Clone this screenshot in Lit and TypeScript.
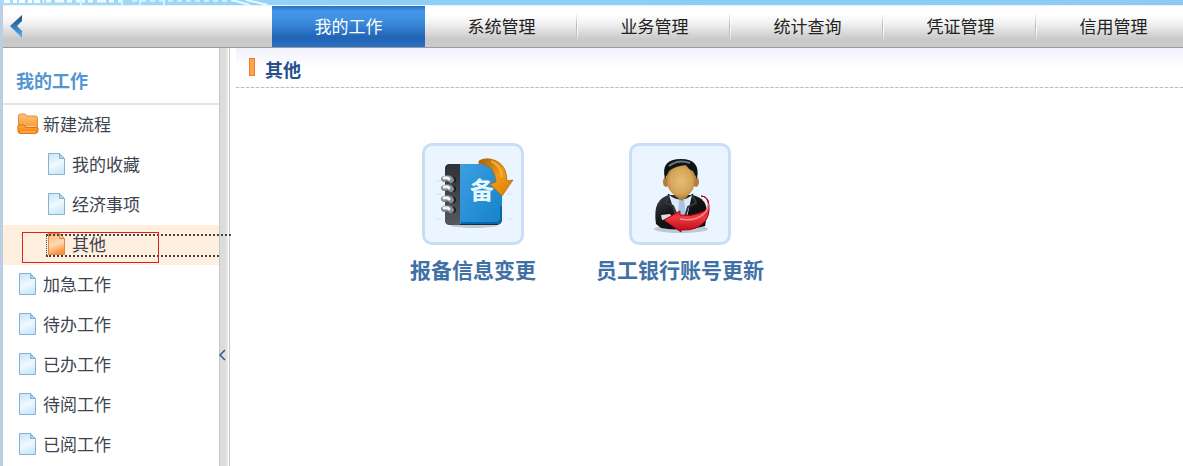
import { LitElement, html, css, svg } from "lit";
import { customElement, property } from "lit/decorators.js";

const tabs = ["我的工作", "系统管理", "业务管理", "统计查询", "凭证管理", "信用管理"];

type Item = { label: string; kind: "folder" | "file"; child?: boolean; current?: boolean };
const items: Item[] = [
  { label: "新建流程", kind: "folder" },
  { label: "我的收藏", kind: "file", child: true },
  { label: "经济事项", kind: "file", child: true },
  { label: "其他", kind: "file", child: true, current: true },
  { label: "加急工作", kind: "file" },
  { label: "待办工作", kind: "file" },
  { label: "已办工作", kind: "file" },
  { label: "待阅工作", kind: "file" },
  { label: "已阅工作", kind: "file" },
];

@customElement("tree-icon")
export class TreeIcon extends LitElement {
  @property() kind = "file";
  @property({ type: Boolean }) active = false;
  static styles = css`
    :host { display: block; flex: none; }
    svg { display: block; }
  `;
  render() {
    if (this.kind === "folder") {
      return html`<svg width="22" height="22" viewBox="0 0 22 22">
        <defs>
          <linearGradient id="b" x2="0" y2="1"><stop offset="0" stop-color="#ffc27a"/><stop offset="1" stop-color="#f28a1c"/></linearGradient>
          <linearGradient id="f" x2="0" y2="1"><stop offset="0" stop-color="#ffa948"/><stop offset="1" stop-color="#f57c00"/></linearGradient>
        </defs>
        <path d="M1.500 13V3q0-2 2-2h4q1.500 0 2 2h8.500q2.500 0 2.500 2V15q0 3-2 5H3z" fill="url(#b)" stroke="#e88a35"/>
        <path d="M.7 14q0-2 2-2h3.800q1.500 0 2 2.500h11q2 0 1.800 2l-.5 2q-.4 2-2.500 2H3.500q-2.200 0-2.500-2z" fill="url(#f)" stroke="#d96a06" stroke-width=".8"/>
        <path d="M9 13.500h10M3.500 19h15" stroke="#ffd5a4" stroke-width=".8"/>
      </svg>`;
    }
    const [edge, top, bottom, fold] = this.active
      ? ["#dd8a45", "#ffd9b0", "#ff9440", "#ffc18c"]
      : ["#86b2d2", "#f0f9ff", "#cfe9fb", "#a9d0ec"];
    return html`<svg width="18" height="22" viewBox="0 0 18 22">
      <defs><linearGradient id="p" x2=".3" y2="1"><stop offset="0" stop-color=${this.active ? "#ffb878" : "#c8e4f7"}/><stop offset=".6" stop-color=${top}/><stop offset="1" stop-color=${bottom}/></linearGradient></defs>
      <path d="M.5.500H11.500L16.500 5.500V21.500H.5z" fill="url(#p)" stroke=${edge}/>
      <path d="M11.500.500V5.500H16.500z" fill=${fold} stroke=${edge}/>
    </svg>`;
  }
}

const notebook = html`<svg class="art" viewBox="0 0 96 96" aria-hidden="true">
  <defs>
    <linearGradient id="cover" x2="1" y2="1"><stop offset="0" stop-color="#3d9fe0"/><stop offset="1" stop-color="#1582cb"/></linearGradient>
    <linearGradient id="spine" x2="0" y2="1"><stop offset="0" stop-color="#2e3236"/><stop offset="1" stop-color="#55595d"/></linearGradient>
    <linearGradient id="turn" x2="1" y2="1"><stop offset="0" stop-color="#a86204"/><stop offset=".5" stop-color="#f09a18"/><stop offset="1" stop-color="#d87d05"/></linearGradient>
  </defs>
  <path d="M11 35H88M11 48H88M11 73H88" stroke="#d2dbe3" stroke-dasharray="5 3 9 4" opacity=".7"/>
  <ellipse cx="49" cy="79" rx="24" ry="3" fill="#9eafbd" opacity=".6"/>
  <rect x="20" y="18" width="57" height="61" rx="5" fill="#242a2f"/>
  <path d="M35 18H72q5 0 5 5V73q0 5-5 5H35z" fill="url(#cover)"/>
  <path d="M25 18H35V79H25q-5 0-5-5V23q0-5 5-5z" fill="url(#spine)"/>
  <path d="M76 60V72q0 5-6 5H36" fill="none" stroke="#0867a6" stroke-width="2"/>
  ${[34, 43, 54, 64].map((y) => svg`<g>
    <circle cx="28" cy=${y} r="3" fill="#1a1c1e"/>
    <path d="M19 ${y - 1}q5-2 7 1" fill="none" stroke="#848c93" stroke-width="6" stroke-linecap="round"/>
    <path d="M19 ${y - 2}q4-1 5 1" fill="none" stroke="#f4f5f6" stroke-width="3" stroke-linecap="round"/></g>`)}
  <text x="57" y="53" text-anchor="middle" class="glyph">备</text>
  <path d="M54 15C62 10 76 14 80 24Q82 29 82 35L88 34 77 50 65 38 71 36Q70 24 63 20 58 17 54 18z" fill="url(#turn)" stroke="#a96406" stroke-width=".7"/>
  <path d="M66 15q10 4 11 16" fill="none" stroke="#ffbf4d" stroke-width="2" opacity=".7"/>
</svg>`;

const person = html`<svg class="art" viewBox="0 0 96 96" aria-hidden="true">
  <defs>
    <radialGradient id="face" cx=".48" cy=".5" r=".6"><stop offset="0" stop-color="#e6bd79"/><stop offset=".65" stop-color="#d5a458"/><stop offset="1" stop-color="#986426"/></radialGradient>
    <linearGradient id="suit" x2="1" y2="1"><stop offset="0" stop-color="#3c4247"/><stop offset=".4" stop-color="#151719"/><stop offset="1" stop-color="#050506"/></linearGradient>
    <linearGradient id="red" x2="0" y2="1"><stop offset="0" stop-color="#bd0c18"/><stop offset=".6" stop-color="#ee3a43"/><stop offset="1" stop-color="#b80715"/></linearGradient>
  </defs>
  <ellipse cx="49" cy="83" rx="27" ry="4" fill="#8d9ba6" opacity=".5"/>
  <path d="M24 78Q20 52 38 49L60 49Q76 52 75 69L73 80Q52 86 29 82z" fill="url(#suit)"/>
  <path d="M37 49Q49 58 60 49L55 71H44z" fill="#dceafa"/>
  <path d="M47 54h5l2 15-4 3-4-3z" fill="#a8c4e2"/>
  <path d="M37 48L34 57 41 60 46 72M60 48L64 57 56 61 53 71" fill="none" stroke="#32383e" stroke-width="2"/>
  <path d="M43 43h13v7l-6 5-7-5z" fill="#b37b36"/>
  <ellipse cx="34" cy="36" rx="3" ry="5" fill="#b17d3b"/><ellipse cx="64" cy="36" rx="3" ry="5" fill="#b17d3b"/>
  <path d="M35 25Q35 18 49 18T64 26L63 38Q59 51 49 52 38 49 35 38z" fill="url(#face)"/>
  <path d="M33 33Q28 13 49 13 69 13 65 33L61 25Q57 24 54 19 43 20 37 25z" fill="#101417"/>
  <path d="M37 20Q46 13 58 17" fill="none" stroke="#6c7880" stroke-width="2"/>
  <path d="M29 69l9-1 3 4-11 2z" fill="#d7dde1"/>
  <path d="M69 50Q74 50 76 56 79 63 68 67 58 71 48 69V65L32 74 49 86V84Q66 85 74 74 79 66 76 54 74 50 69 50z" fill="url(#red)" stroke="#a90413"/>
  <path d="M76 58q1 9-11 14-7 3-17 1" fill="none" stroke="#ff898b" stroke-width="1.500"/>
</svg>`;

@customElement("app-root")
export class AppRoot extends LitElement {
  static styles = css`
    :host { display: block; font: 17px/24px "Noto Sans CJK SC", sans-serif; color: #3c4450; background: #fff; }
    *, *::before, *::after { box-sizing: border-box; }
    a { color: inherit; text-decoration: none; }
    ul { list-style: none; margin: 0; padding: 0; }
    .page { min-height: 100vh; display: flex; flex-direction: column; overflow: hidden; }
    .banner { height: 5px; background: linear-gradient(90deg, #a6dcf8, #8fd0f6 30%, #8ccaf4); }
    .banner svg { display: block; }
    .frame { flex: 1; display: flex; flex-direction: column; border-left: 3px solid #bccfe2; }
    .nav { display: flex; height: 43px; overflow: hidden; border-bottom: 1px solid #999b9e; border-top: 1px solid #e9f5fc; background: linear-gradient(#fff 20%, #f2f2f2 42%, #c8c8c8 82%, #cbcbcb); }
    .back { flex: none; width: 269px; margin: 0; padding: 7px 6px; border: 0; background: none; text-align: left; }
    .back svg { display: block; }
    .tabs { display: flex; }
    .tab { flex: none; width: 153px; height: 42px; padding-bottom: 2px; display: flex; align-items: center; justify-content: center; color: #222;
      background:
        linear-gradient(transparent 15%, #b4b4b4 50%, transparent 85%) right 1px top / 1px 100% no-repeat,
        linear-gradient(transparent 15%, #fff 55%, transparent 90%) right top / 1px 100% no-repeat; }
    .tab.on { color: #fff; background: linear-gradient(#2a6fc1, #4398ea 12%, #3e8edf 35%, #2264b6 75%, #2c71c4); }
    .body { flex: 1; display: flex; }
    .side { flex: none; width: 216px; }
    .side h2 { margin: 0; height: 57px; padding: 20px 13px 0; font-size: 18px; line-height: 24px; color: #5296d2; border-bottom: 2px solid #e4e4e4; }
    .row { display: flex; align-items: center; height: 40px; padding: 0 0 2px 16px; }
    .row.child { padding-left: 45px; }
    .row a { flex: 1; display: flex; align-items: center; gap: 6px; }
    .row.folder { padding-left: 14px; }
    .row.folder a { gap: 4px; }
    .row.current { position: relative; background: #ffefdf; }
    .row.current::before { content: ""; position: absolute; z-index: 2; left: 43px; right: -12px; top: 9px; border-top: 2px dotted #444; }
    .row.current::after { content: ""; position: absolute; left: 43px; right: 0; top: 10px; height: 22px; border: 2px dotted #444; border-width: 0 0 2px 1px; }
    .mark { position: absolute; z-index: 3; left: 19px; top: 7px; width: 137px; height: 31px; border: 1px solid #e02020; }
    .split { flex: none; width: 12px; display: flex; align-items: center; border: 0; padding: 0; background: linear-gradient(90deg, #c6c6c6 1px, #dcdcdc 1px 6px, #ececec 9px, #fff 9px 10px, #c9c9c9 10px 11px, #fff 11px); }
    .split svg { display: block; margin-top: 196px; }
    .main { flex: 1; min-width: 0; padding-left: 5px; }
    .title { height: 40px; margin: 0; padding: 10px 13px 0; display: flex; gap: 10px; font-size: 18px; line-height: 22px; color: #254f88; border-bottom: 1px dashed #bbb; background: linear-gradient(#f0f1fa, #fff 50%); }
    .title::before { content: ""; width: 6px; height: 18px; border: 1px solid #e8822a; background: #ffa34f; }
    .apps { display: flex; gap: 41px; padding: 55px 154px; }
    .app { width: 166px; display: flex; flex-direction: column; align-items: center; gap: 11px; font-size: 21px; line-height: 26px; font-weight: 700; color: #3f70a6; white-space: nowrap; }
    .tile { width: 102px; height: 102px; border: 3px solid #c7def4; border-radius: 10px; background: #ebf5ff; }
    .art { display: block; width: 96px; height: 96px; }
    .glyph { font: 700 24px "Noto Sans CJK SC", sans-serif; fill: #e8f7ff; }
  `;

  render() {
    return html`<div class="page">
      <div class="banner">
        <svg width="300" height="5" aria-hidden="true">
          <path d="M4 1H44" stroke="#fff" stroke-width="4" stroke-dasharray="6 3 4 2"/>
          <path d="M46 1H122" stroke="#fff" stroke-width="3" stroke-dasharray="5 4 9 3" opacity=".85"/>
          <path d="M122 0v5M81 0v5M140 0v5M164 0v5" stroke="#c9f8ff" stroke-width="2"/>
          <path d="M132 1H236" stroke="#fff" stroke-width="2" stroke-dasharray="5 4" opacity=".55"/>
          <path d="M232 0L250 5M246 0L268 5" stroke="#e9faff" stroke-width="2"/>
        </svg>
      </div>
      <div class="frame">
        <header class="nav">
          <button class="back" aria-label="返回">
            <svg width="15" height="25" viewBox="0 0 15 25">
              <defs><linearGradient id="g" x2="0" y2="1"><stop offset="0" stop-color="#244f78"/><stop offset=".45" stop-color="#2e77b5"/><stop offset="1" stop-color="#69b0e8"/></linearGradient></defs>
              <path d="M13 1V7L8 12 13 17V24L1 12z" fill="url(#g)"/>
            </svg>
          </button>
          <nav class="tabs">${tabs.map((t, i) => html`<a href="#" class="tab ${i === 0 ? "on" : ""}">${t}</a>`)}</nav>
        </header>
        <div class="body">
          <aside class="side">
            <h2>我的工作</h2>
            <ul>${items.map((it) => html`<li class="row ${it.kind} ${it.child ? "child" : ""} ${it.current ? "current" : ""}">
              <a href="#"><tree-icon .kind=${it.kind} .active=${!!it.current}></tree-icon>${it.label}</a>
              ${it.current ? html`<span class="mark"></span>` : ""}
            </li>`)}</ul>
          </aside>
          <button class="split" aria-label="收起">
            <svg width="7" height="12" viewBox="0 0 7 12"><path d="M6 1L1 6 6 11" fill="none" stroke="#28508c" stroke-width="1.400"/></svg>
          </button>
          <main class="main">
            <h1 class="title">其他</h1>
            <div class="apps">
              <a href="#" class="app"><span class="tile">${notebook}</span>报备信息变更</a>
              <a href="#" class="app"><span class="tile">${person}</span>员工银行账号更新</a>
            </div>
          </main>
        </div>
      </div>
    </div>`;
  }
}
